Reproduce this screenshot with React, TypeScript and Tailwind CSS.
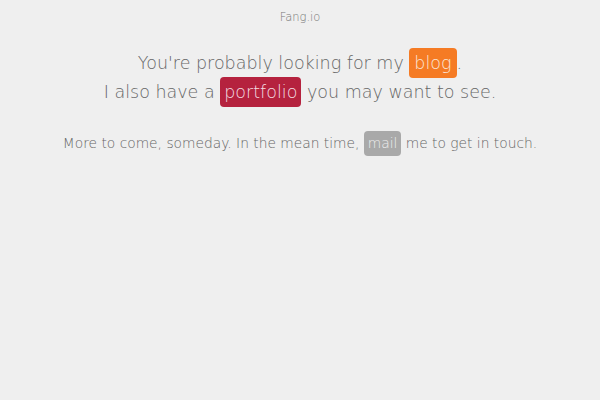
export default function App() {
  return (
    <div
      className="w-[600px] h-[400px] bg-[#efefef] text-[#666] text-center font-light"
      style={{ fontFamily: '"DejaVu Sans", sans-serif' }}
    >
      <div className="pt-[9px] text-[11.5px] leading-[16px] text-[#777]">Fang.io</div>
      <div className="mt-[23px] text-[17.5px] leading-[30px]">
        <p>
          You're probably looking for my{" "}
          <span className="inline-block bg-[#f57b24] text-[#fbe6d6] rounded-[4px] px-[5px]">blog</span>.
        </p>
        <p className="-mt-[1px]">
          I also have a{" "}
          <span className="inline-block bg-[#b5223e] text-[#f3dde2] rounded-[4px] px-[4px]">portfolio</span>{" "}
          you may want to see.
        </p>
      </div>
      <div className="mt-[24px] text-[13.8px] leading-[25px]">
        More to come, someday. In the mean time,{" "}
        <span className="inline-block bg-[#a9a9a9] text-[#eee] rounded-[4px] px-[4px]">mail</span> me to get in touch.
      </div>
    </div>
  );
}
